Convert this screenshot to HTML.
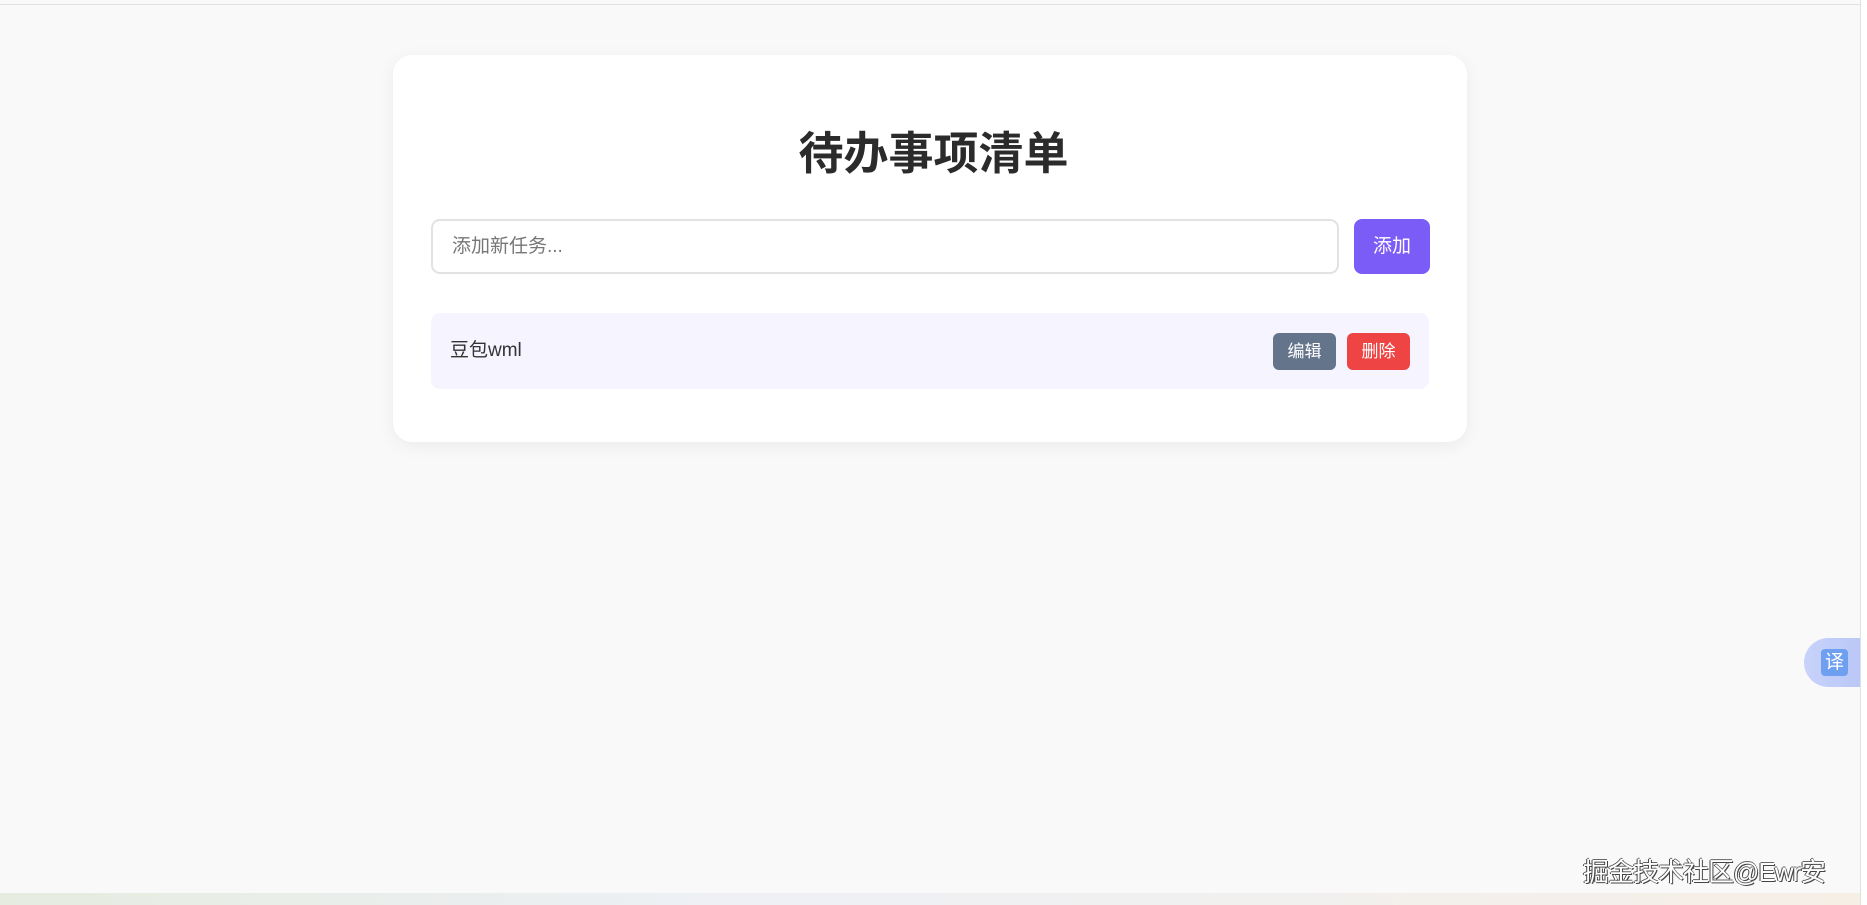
<!DOCTYPE html>
<html><head><meta charset="utf-8"><style>
*{box-sizing:border-box;margin:0;padding:0}
body{width:1867px;height:905px;background:#f9f9fa;font-family:"Liberation Sans","Noto Sans CJK SC",sans-serif;position:relative;overflow:hidden}
.top{position:absolute;left:0;top:0;width:1860px;height:5px;border-bottom:1px solid #e2e2e2;background:#f9f9fa}
.sb{position:absolute;left:1860px;top:0;width:7px;height:905px;background:#fff;border-left:1px solid #e0e0e0}
.card{position:absolute;left:393px;top:55px;width:1074px;height:387px;background:#fff;border-radius:19px;box-shadow:0 4px 18px rgba(0,0,0,.06)}
h1{position:absolute;left:0;width:100%;top:126px;text-align:center;font-size:45px;line-height:56px;color:#2b2b2b;font-weight:bold}
.inp{position:absolute;left:431px;top:219px;width:908px;height:55px;border:2px solid #e2e2e2;border-radius:9px;background:#fff;font-size:19px;color:#777;padding-left:19px;line-height:51px}
.add{position:absolute;left:1354px;top:219px;width:76px;height:55px;background:#7b5cf6;border-radius:8px;color:#fff;font-size:19px;text-align:center;line-height:55px}
.item{position:absolute;left:431px;top:313px;width:998px;height:76px;background:#f6f4ff;border-radius:9px}
.item span{position:absolute;left:19px;top:0;line-height:76px;font-size:19px;color:#333}
.b{position:absolute;top:20px;width:63px;height:37px;border-radius:6px;color:#fff;font-size:17px;text-align:center;line-height:37px}
.tr{position:absolute;left:1804px;top:638px;width:60px;height:49px;border-radius:25px 0 0 25px;background:linear-gradient(90deg,#c8d3fb,#b9c6f7)}
.tr i{position:absolute;left:17px;top:11px;width:27px;height:27px;background:#6f9ff0;border-radius:4px;color:#fff;font-style:normal;font-size:19px;text-align:center;line-height:27px}
.wm{position:absolute;left:1583px;top:852px;font-size:26px;color:#fff;text-shadow:1px 1px 0 #444,-1px 0 0 #444,0 -1px 0 #666;letter-spacing:-1px}
.bot{position:absolute;left:0;top:893px;width:1860px;height:12px;background:linear-gradient(90deg,#e6ece0,#eef0f6 40%,#f6efe6)}
</style></head><body>
<div class="top"></div>
<div class="card"></div>
<h1>待办事项清单</h1>
<div class="inp">添加新任务...</div>
<div class="add">添加</div>
<div class="item"><span>豆包wml</span>
<div class="b" style="left:842px;background:#64748b">编辑</div>
<div class="b" style="left:916px;background:#ef4444">删除</div></div>
<div class="tr"><i>译</i></div>
<div class="wm">掘金技术社区@Ewr安</div>
<div class="bot"></div>
<div class="sb"></div>
</body></html>
